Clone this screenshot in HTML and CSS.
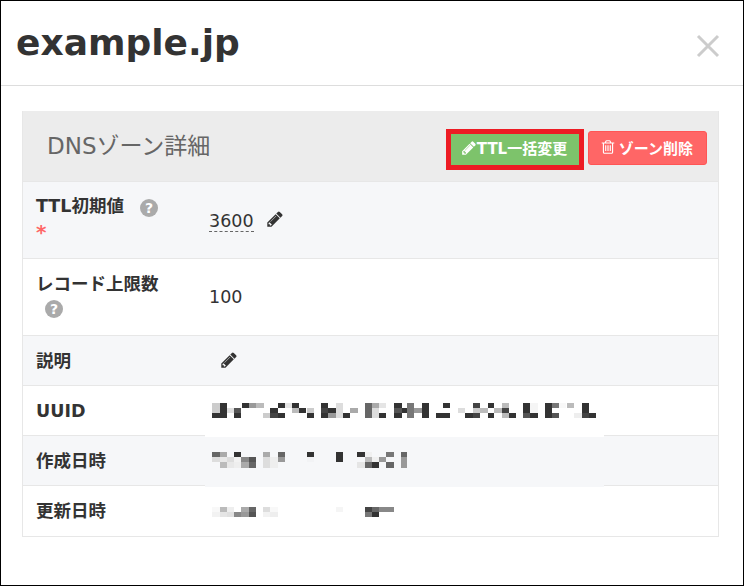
FILE: index.html
```html
<!DOCTYPE html>
<html>
  <head>
    <title>example.jp</title>
    <link rel="stylesheet" href="styles.css">
  </head>
  <body>
    <div class="modal">
      <div class="modal-header">
        <h1>example.jp</h1>
        <span class="close">
          <svg width="24" height="24" viewBox="0 0 24 24"><path d="M2 2 L22 22 M22 2 L2 22" /></svg>
        </span>
      </div>
      <div class="modal-body">
        <div class="panel">
          <div class="panel-heading">
            <h2>DNSゾーン詳細</h2>
            <div class="buttons">
              <div class="highlight">
                <button class="btn btn-green">
                  <svg class="icon" width="16" height="16" viewBox="0 0 1792 1792"><path d="M491 1536l91-91-235-235-91 91v107h128v128h107zm523-928q0-22-22-22-10 0-17 7l-542 542q-7 7-7 17 0 22 22 22 10 0 17-7l542-542q7-7 7-17zm-54-192l416 416-832 832h-416v-416zm683 96q0 53-37 90l-166 166-416-416 166-165q36-38 90-38 53 0 91 38l235 234q37 39 37 91z" /></svg>TTL一括変更
                </button>
              </div>
              <button class="btn btn-red">
                <svg class="icon icon-trash" width="16" height="16" viewBox="0 0 1792 1792"><path d="M704 736v576q0 14-9 23t-23 9h-64q-14 0-23-9t-9-23v-576q0-14 9-23t23-9h64q14 0 23 9t9 23zm256 0v576q0 14-9 23t-23 9h-64q-14 0-23-9t-9-23v-576q0-14 9-23t23-9h64q14 0 23 9t9 23zm256 0v576q0 14-9 23t-23 9h-64q-14 0-23-9t-9-23v-576q0-14 9-23t23-9h64q14 0 23 9t9 23zm128 724v-948h-896v948q0 22 7 40.5t14.5 27 10.5 8.5h832q3 0 10.5-8.5t14.5-27 7-40.5zm-672-1076h448l-48-117q-7-9-17-11h-317q-10 2-17 11zm928 32v64q0 14-9 23t-23 9h-96v948q0 83-47 143.5t-113 60.5h-832q-66 0-113-58.5t-47-141.5v-952h-96q-14 0-23-9t-9-23v-64q0-14 9-23t23-9h309l70-167q15-37 54-63t79-26h320q40 0 79 26t54 63l70 167h309q14 0 23 9t9 23z" /></svg>ゾーン削除
              </button>
            </div>
          </div>
          <table>
            <tr class="row-ttl">
              <th>TTL初期値<span class="help help-first">?</span><br><span class="req">*</span></th>
              <td><span class="editable">3600</span><svg class="pencil" width="18" height="18" viewBox="0 0 1792 1792"><path d="M491 1536l91-91-235-235-91 91v107h128v128h107zm523-928q0-22-22-22-10 0-17 7l-542 542q-7 7-7 17 0 22 22 22 10 0 17-7l542-542q7-7 7-17zm-54-192l416 416-832 832h-416v-416zm683 96q0 53-37 90l-166 166-416-416 166-165q36-38 90-38 53 0 91 38l235 234q37 39 37 91z" /></svg></td>
            </tr>
            <tr class="row-limit">
              <th>レコード上限数<br><span class="help help-wrapped">?</span></th>
              <td>100</td>
            </tr>
            <tr class="row-short">
              <th>説明</th>
              <td><svg class="pencil pencil-solo" width="18" height="18" viewBox="0 0 1792 1792"><path d="M491 1536l91-91-235-235-91 91v107h128v128h107zm523-928q0-22-22-22-10 0-17 7l-542 542q-7 7-7 17 0 22 22 22 10 0 17-7l542-542q7-7 7-17zm-54-192l416 416-832 832h-416v-416zm683 96q0 53-37 90l-166 166-416-416 166-165q36-38 90-38 53 0 91 38l235 234q37 39 37 91z" /></svg></td>
            </tr>
            <tr class="row-short">
              <th>UUID</th>
              <td>
                <!-- pixelated value, coordinates are 3x -->
                <div class="mask mask-uuid">
                  <svg class="mosaic" width="400" height="30" viewBox="0 0 1200 90" shape-rendering="crispEdges">
                    <g transform="translate(0 24)">
                      <rect x="22" width="22" height="15" fill="#ccc"/><rect x="44" width="22" height="15" fill="#333"/><rect x="110" width="22" height="15" fill="#333"/><rect x="132" width="22" height="15" fill="#999"/><rect x="154" width="22" height="15" fill="#bbb"/><rect x="220" width="20" height="15" fill="#333"/><rect x="240" width="20" height="15" fill="#e5e5e5"/><rect x="260" width="22" height="15" fill="#333"/><rect x="348" width="22" height="15" fill="#333"/><rect x="392" width="22" height="15" fill="#ddd"/><rect x="480" width="20" height="15" fill="#666"/><rect x="500" width="22" height="15" fill="#aaa"/><rect x="522" width="22" height="15" fill="#e5e5e5"/><rect x="568" width="22" height="15" fill="#333"/>
                      <rect x="605" width="22" height="15" fill="#777"/><rect x="650" width="22" height="15" fill="#333"/><rect x="714" width="22" height="15" fill="#333"/><rect x="804" width="22" height="15" fill="#444"/><rect x="848" width="20" height="15" fill="#333"/><rect x="890" width="22" height="15" fill="#bbb"/><rect x="954" width="22" height="15" fill="#333"/><rect x="976" width="22" height="15" fill="#f5f5f5"/><rect x="1020" width="22" height="15" fill="#333"/><rect x="1042" width="20" height="15" fill="#777"/><rect x="1062" width="22" height="15" fill="#f8f8f8"/><rect x="1086" width="20" height="15" fill="#bbb"/><rect x="1130" width="22" height="15" fill="#333"/>
                    </g>
                    <g transform="translate(0 39)">
                      <rect x="22" width="22" height="15" fill="#ccc"/><rect x="44" width="22" height="15" fill="#333"/><rect x="66" width="22" height="15" fill="#e0e0e0"/><rect x="88" width="20" height="15" fill="#555"/><rect x="196" width="22" height="15" fill="#333"/><rect x="262" width="20" height="15" fill="#bbb"/><rect x="282" width="22" height="15" fill="#333"/><rect x="306" width="22" height="15" fill="#ccc"/><rect x="348" width="22" height="15" fill="#444"/><rect x="370" width="22" height="15" fill="#333"/><rect x="392" width="22" height="15" fill="#ddd"/><rect x="436" width="22" height="15" fill="#aaa"/><rect x="480" width="20" height="15" fill="#666"/><rect x="500" width="22" height="15" fill="#ddd"/><rect x="568" width="22" height="15" fill="#555"/><rect x="590" width="15" height="15" fill="#333"/>
                      <rect x="605" width="22" height="15" fill="#777"/><rect x="627" width="23" height="15" fill="#999"/><rect x="650" width="22" height="15" fill="#333"/><rect x="758" width="22" height="15" fill="#ddd"/><rect x="804" width="22" height="15" fill="#ccc"/><rect x="826" width="22" height="15" fill="#bbb"/><rect x="868" width="22" height="15" fill="#bbb"/><rect x="890" width="22" height="15" fill="#444"/><rect x="954" width="22" height="15" fill="#333"/><rect x="976" width="22" height="15" fill="#f5f5f5"/><rect x="1020" width="22" height="15" fill="#333"/><rect x="1130" width="22" height="15" fill="#333"/>
                    </g>
                    <g transform="translate(0 54)">
                      <rect x="22" width="44" height="15" fill="#333"/><rect x="88" width="20" height="15" fill="#333"/><rect x="174" width="22" height="15" fill="#ccc"/><rect x="196" width="22" height="15" fill="#444"/><rect x="218" width="22" height="15" fill="#333"/><rect x="306" width="22" height="15" fill="#333"/><rect x="348" width="22" height="15" fill="#333"/><rect x="370" width="22" height="15" fill="#999"/><rect x="392" width="22" height="15" fill="#ddd"/><rect x="414" width="22" height="15" fill="#333"/><rect x="480" width="20" height="15" fill="#666"/><rect x="500" width="22" height="15" fill="#ddd"/><rect x="522" width="22" height="15" fill="#333"/><rect x="568" width="22" height="15" fill="#333"/>
                      <rect x="605" width="22" height="15" fill="#777"/><rect x="650" width="22" height="15" fill="#333"/><rect x="692" width="44" height="15" fill="#333"/><rect x="780" width="24" height="15" fill="#333"/><rect x="804" width="22" height="15" fill="#444"/><rect x="848" width="20" height="15" fill="#333"/><rect x="890" width="22" height="15" fill="#bbb"/><rect x="912" width="22" height="15" fill="#333"/><rect x="954" width="22" height="15" fill="#555"/><rect x="976" width="22" height="15" fill="#333"/><rect x="1020" width="22" height="15" fill="#333"/><rect x="1042" width="20" height="15" fill="#555"/><rect x="1106" width="24" height="15" fill="#eee"/><rect x="1130" width="22" height="15" fill="#444"/><rect x="1152" width="22" height="15" fill="#333"/>
                    </g>
                  </svg>
                </div>
              </td>
            </tr>
            <tr class="row-short">
              <th>作成日時</th>
              <td>
                <div class="mask mask-created">
                  <svg class="mosaic" width="210" height="30" viewBox="0 0 630 90" shape-rendering="crispEdges">
                    <g transform="translate(0 21)">
                      <rect x="22" width="22" height="15" fill="#666"/><rect x="44" width="22" height="15" fill="#aaa"/><rect x="88" width="20" height="15" fill="#333"/><rect x="174" width="22" height="15" fill="#aaa"/><rect x="218" width="22" height="15" fill="#666"/><rect x="306" width="22" height="15" fill="#333"/><rect x="392" width="22" height="15" fill="#333"/><rect x="456" width="24" height="15" fill="#333"/><rect x="480" width="20" height="15" fill="#f0f0f0"/><rect x="544" width="22" height="15" fill="#777"/><rect x="588" width="18" height="15" fill="#666"/>
                    </g>
                    <g transform="translate(0 36)">
                      <rect x="22" width="22" height="15" fill="#ddd"/><rect x="44" width="22" height="15" fill="#e8e8e8"/><rect x="66" width="22" height="15" fill="#ddd"/><rect x="88" width="20" height="15" fill="#f2f2f2"/><rect x="108" width="24" height="15" fill="#888"/><rect x="132" width="22" height="15" fill="#555"/><rect x="174" width="22" height="15" fill="#ddd"/><rect x="196" width="22" height="15" fill="#eee"/><rect x="218" width="22" height="15" fill="#999"/><rect x="306" width="22" height="15" fill="#f2f3f5"/><rect x="392" width="22" height="15" fill="#333"/><rect x="480" width="20" height="15" fill="#bbb"/><rect x="500" width="22" height="15" fill="#f0f0f0"/><rect x="522" width="22" height="15" fill="#999"/><rect x="588" width="18" height="15" fill="#999"/>
                    </g>
                    <g transform="translate(0 51)">
                      <rect x="44" width="22" height="17" fill="#bbb"/><rect x="66" width="22" height="17" fill="#e8e8e8"/><rect x="88" width="20" height="17" fill="#eee"/><rect x="108" width="24" height="17" fill="#aaa"/><rect x="132" width="22" height="17" fill="#666"/><rect x="174" width="22" height="17" fill="#ddd"/><rect x="196" width="22" height="17" fill="#eee"/><rect x="456" width="24" height="17" fill="#e5e5e5"/><rect x="480" width="20" height="17" fill="#666"/><rect x="500" width="22" height="17" fill="#333"/><rect x="544" width="22" height="17" fill="#666"/><rect x="588" width="18" height="17" fill="#999"/>
                    </g>
                  </svg>
                </div>
              </td>
            </tr>
            <tr class="row-short">
              <th>更新日時</th>
              <td>
                <div class="mask mask-updated">
                  <svg class="mosaic" width="200" height="25" viewBox="0 0 600 75" shape-rendering="crispEdges">
                    <g transform="translate(0 27)">
                      <rect x="22" width="22" height="15" fill="#f8f8f8"/><rect x="44" width="22" height="15" fill="#bbb"/><rect x="66" width="22" height="15" fill="#eee"/><rect x="108" width="24" height="15" fill="#aaa"/><rect x="132" width="22" height="15" fill="#666"/><rect x="174" width="22" height="15" fill="#ddd"/><rect x="196" width="22" height="15" fill="#f8f8f8"/><rect x="392" width="22" height="15" fill="#f5f5f5"/><rect x="480" width="20" height="15" fill="#444"/><rect x="500" width="22" height="15" fill="#666"/><rect x="522" width="22" height="15" fill="#888"/><rect x="544" width="22" height="15" fill="#888"/>
                    </g>
                    <g transform="translate(0 42)">
                      <rect x="22" width="22" height="16" fill="#f2f2f2"/><rect x="44" width="22" height="16" fill="#e5e5e5"/><rect x="66" width="22" height="16" fill="#e0e0e0"/><rect x="88" width="20" height="16" fill="#888"/><rect x="108" width="24" height="16" fill="#999"/><rect x="132" width="22" height="16" fill="#555"/><rect x="174" width="22" height="16" fill="#f2f2f2"/><rect x="196" width="22" height="16" fill="#eee"/><rect x="480" width="20" height="16" fill="#777"/><rect x="500" width="22" height="16" fill="#333"/>
                    </g>
                  </svg>
                </div>
              </td>
            </tr>
          </table>
        </div>
      </div>
    </div>
  </body>
</html>
```

FILE: styles.css
```css
* {
  box-sizing: border-box;
}

html,
body {
  margin: 0;
  height: 100%;
}

body {
  background-color: #fff;
  font-family: "DejaVu Sans", "Noto Sans CJK JP", sans-serif;
  color: #333;
}

.modal {
  height: 586px;
  border: 1px solid #000;
  overflow: hidden;
}

.modal-header {
  height: 85px;
  border-bottom: 1px solid #ddd;
  padding: 0 23px 2px 15px;
  display: flex;
  align-items: center;
  justify-content: space-between;
}

h1 {
  margin: 0;
  font-size: 36px;
  font-weight: bold;
}

.close {
  margin-top: 8px;
}

.close svg {
  display: block;
  stroke: #ccc;
  stroke-width: 3;
  fill: none;
}

.modal-body {
  padding: 25px 24px 0 21px;
}

.panel {
  border: 1px solid #e7e7e7;
  border-top: 0;
}

.panel-heading {
  height: 70px;
  background-color: #ececec;
  display: flex;
  align-items: center;
  justify-content: space-between;
  padding: 7px 11px 0 24px;
}

h2 {
  margin: 0 0 11px;
  font-size: 23px;
  font-weight: normal;
  color: #666;
}

.buttons {
  display: flex;
  align-items: center;
  gap: 4px;
}

.highlight {
  border: 5px solid #ed1c24;
}

.btn {
  height: 31px;
  border: 1px solid transparent;
  color: #fff;
  font-family: inherit;
  font-size: 15px;
  font-weight: bold;
  padding: 0;
  display: flex;
  align-items: center;
  justify-content: center;
}

.btn-green {
  width: 128px;
  padding: 0 2px 4px 0;
  background-color: #7dc36b;
}

.btn-red {
  width: 119px;
  height: 34px;
  margin-bottom: 3px;
  padding: 0 2px 2px 0;
  background-color: #ff6666;
  border: 1px solid #f55;
  border-radius: 3px;
}

.icon {
  fill: #fff;
}

.icon-trash {
  margin-right: 3px;
}

table {
  width: 100%;
  border-collapse: collapse;
}

tr {
  border-top: 1px solid #e7e7e7;
}

tr:nth-child(odd) {
  background-color: #f6f7f9;
}

th {
  width: 186px;
  padding: 0 0 0 13px;
  text-align: left;
  font-size: 17.5px;
  line-height: 25px;
  vertical-align: middle;
}

td {
  position: relative;
  padding: 0;
  font-size: 17.5px;
  vertical-align: middle;
}

.row-ttl {
  height: 77px;
}

.row-ttl th {
  vertical-align: top;
  padding-top: 12px;
}

.row-ttl td {
  padding-top: 2px;
}

.row-limit {
  height: 77px;
}

.row-short {
  height: 50px;
}

.row-short th,
.row-short td {
  padding-top: 2px;
}

.help {
  display: inline-block;
  width: 18px;
  height: 18px;
  margin-left: 16px;
  border-radius: 50%;
  background-color: #aaa;
  color: #fff;
  font-size: 14px;
  line-height: 18px;
  text-align: center;
  vertical-align: 1px;
}

.help-first {
  vertical-align: -1px;
}

.help-wrapped {
  margin-left: 9px;
}

.req {
  color: #ff6666;
  font-size: 20px;
  line-height: 25px;
  vertical-align: -2px;
}

.editable {
  display: inline-block;
  line-height: 19px;
  border-bottom: 1px dashed #666;
}

.pencil {
  fill: #333;
  margin-left: 12px;
  vertical-align: -1px;
}

.pencil-solo {
  margin-left: 11px;
}

/* patches over the redacted values */
.mask {
  position: absolute;
  left: -4px;
  width: 399px;
}

.mosaic {
  display: block;
}

.mask-uuid {
  top: 0;
  height: 51px;
  background-color: #fff;
  padding-top: 9px;
}

.mask-created {
  top: 1px;
  height: 50px;
  background-color: #f6f7f9;
  padding-top: 8px;
}

.mask-updated {
  top: 1px;
  left: -13px;
  width: 420px;
  height: 48px;
  background-color: #fff;
  padding: 11px 0 0 9px;
}
```
